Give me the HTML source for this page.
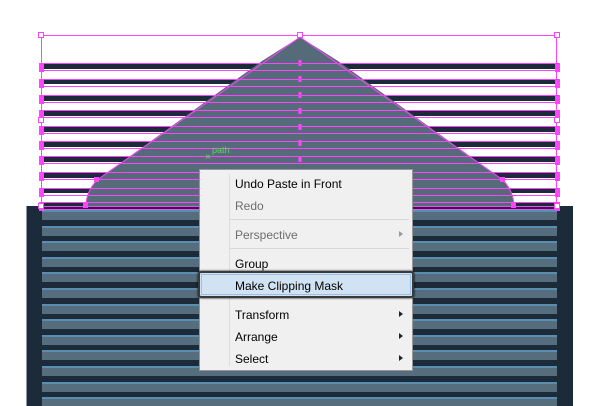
<!DOCTYPE html>
<html><head><meta charset="utf-8"><style>
body{margin:0;width:600px;height:406px;overflow:hidden;background:#fff;font-family:"Liberation Sans",sans-serif}
.menu{position:absolute;left:199px;top:169px;width:214px;height:202px;background:#f0f0f0;border:1px solid #979797;box-sizing:border-box}
.gut{position:absolute;left:29px;top:4px;bottom:4px;width:1px;background:#ddd}
.it{position:absolute;left:35px;font-size:12px;color:#000;line-height:14px}
.dis{color:#6d6d6d}
.sep{position:absolute;left:30px;right:3px;height:1px;background:#d7d7d7}
.arr{position:absolute;right:9px;width:0;height:0;border-top:3.5px solid transparent;border-bottom:3.5px solid transparent;border-left:4px solid #222}
.hl{position:absolute;left:-2px;top:101px;width:216px;height:27px;border:2px solid #3a3a3a;border-radius:3px;box-sizing:border-box;background:#d1e2f2;box-shadow:0 0 2px #000}
.hl div{position:absolute;inset:1px;border:1px solid #9ac0e6}
</style></head><body>
<svg width="600" height="406" style="position:absolute;left:0;top:0">
<defs>
<g id="s"><rect x="42" y="0" width="515" height="2" fill="#5b8db0"/><rect x="42" y="2" width="515" height="8" fill="#556d7c"/></g>
<g id="hm"><rect x="39" y="0" width="5" height="9" fill="#ff44ff"/><rect x="555" y="0" width="5" height="9" fill="#ff44ff"/><path d="M42 0.5H557M42 7.5H557" stroke="#ff44ff" fill="none"/></g>
</defs>
<rect x="26" y="206" width="547" height="200" fill="#1b2b3a"/>
<rect x="26" y="206" width="1" height="200" fill="#8a97a3"/>
<use href="#s" y="210"/><use href="#s" y="226"/><use href="#s" y="241"/><use href="#s" y="257"/><use href="#s" y="272"/><use href="#s" y="288"/><use href="#s" y="304"/><use href="#s" y="319"/><use href="#s" y="335"/><use href="#s" y="350"/><use href="#s" y="366"/><use href="#s" y="382"/><use href="#s" y="397"/>
<g fill="#1b2b3a">
<rect x="42" y="64" width="515" height="5"/><rect x="42" y="80" width="515" height="4"/><rect x="42" y="96" width="515" height="5"/><rect x="42" y="111" width="515" height="5"/><rect x="42" y="127" width="515" height="5"/><rect x="42" y="142" width="515" height="5"/><rect x="42" y="157" width="515" height="5"/><rect x="42" y="173" width="515" height="5"/><rect x="42" y="189" width="515" height="4"/><rect x="42" y="203" width="515" height="4"/>
</g>
<path d="M300 37 L262 61 L97 180 Q86 192 86 206 H514 Q514 192 503 180 L338 61 Z" fill="#556b79"/>
<use href="#hm" y="63"/><use href="#hm" y="79"/><use href="#hm" y="95"/><use href="#hm" y="110"/><use href="#hm" y="126"/><use href="#hm" y="141"/><use href="#hm" y="156"/><use href="#hm" y="172"/><use href="#hm" y="188"/><use href="#hm" y="202"/>
<g stroke="#ff44ff" stroke-width="1" fill="none">
<rect x="41.5" y="35.5" width="515" height="171"/>
<line x1="300" y1="60" x2="300" y2="206" stroke-width="3" stroke-dasharray="6,10"/>
<path d="M300 37 L97 180 Q86 192 86 206 M300 37 L503 180 Q514 192 514 206"/>
</g>
<g fill="#fff" stroke="#ff44ff"><rect x="38.5" y="32.5" width="5" height="5"/><rect x="554.5" y="32.5" width="5" height="5"/><rect x="297.5" y="32.5" width="5" height="5"/><rect x="38.5" y="203.5" width="5" height="5"/><rect x="554.5" y="203.5" width="5" height="5"/><rect x="38.5" y="117.5" width="5" height="5"/><rect x="554.5" y="117.5" width="5" height="5"/></g>
<g fill="#ff44ff"><rect x="83" y="203" width="5" height="5"/><rect x="511" y="203" width="5" height="5"/><rect x="94" y="177" width="5" height="5"/><rect x="500" y="177" width="5" height="5"/></g>
<text x="205" y="160" fill="#55dd55" font-size="10" font-family="Liberation Sans">×</text>
<text x="212" y="153" fill="#55dd55" font-size="9" font-family="Liberation Sans">path</text>
</svg>
<div class="menu">
<div class="gut"></div>
<div class="it" style="top:7px">Undo Paste in Front</div>
<div class="it dis" style="top:29px">Redo</div>
<div class="sep" style="top:49px"></div>
<div class="it dis" style="top:58px">Perspective</div><div class="arr" style="top:61px;border-left-color:#999"></div>
<div class="sep" style="top:78px"></div>
<div class="it" style="top:87px">Group</div>
<div class="hl"><div></div></div>
<div class="it" style="top:109px">Make Clipping Mask</div>
<div class="it" style="top:138px">Transform</div><div class="arr" style="top:141px"></div>
<div class="it" style="top:160px">Arrange</div><div class="arr" style="top:163px"></div>
<div class="it" style="top:182px">Select</div><div class="arr" style="top:185px"></div>
</div>
</body></html>
